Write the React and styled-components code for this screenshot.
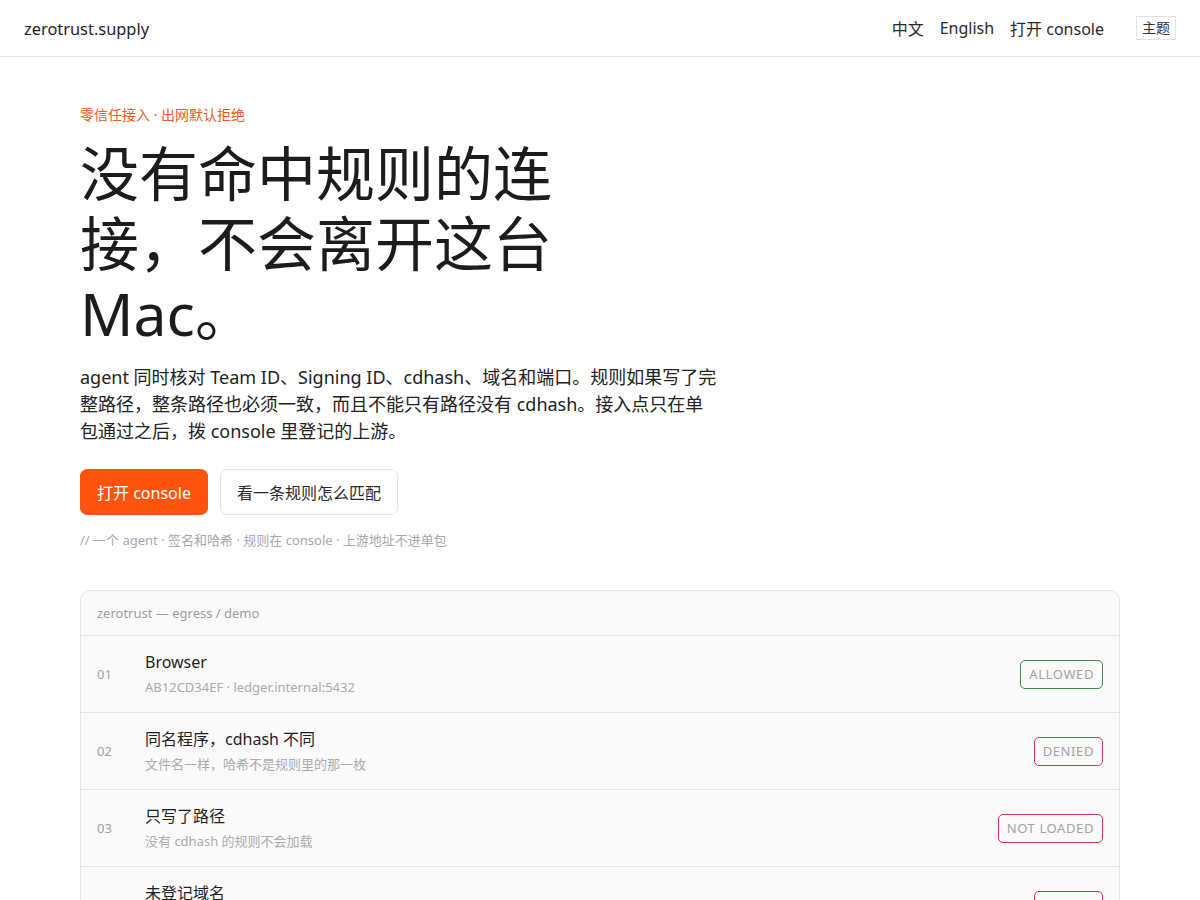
import React from 'react';
import styled, { createGlobalStyle } from 'styled-components';

const GlobalStyle = createGlobalStyle`
  html, body {
    margin: 0;
    padding: 0;
    background: #fff;
    color: #1f1f1f;
    font-family: "Noto Sans", "Noto Sans CJK SC", sans-serif;
  }
  * { box-sizing: border-box; }
`;

const TopBar = styled.header`
  height: 57px;
  display: flex;
  align-items: center;
  justify-content: space-between;
  padding: 0 24px;
  border-bottom: 1px solid #e6e6e6;
`;

const Brand = styled.div`
  font-size: 16.4px;
  color: #1f1f1f;
`;

const Nav = styled.nav`
  display: flex;
  align-items: center;
  gap: 16px;
  font-size: 16px;
  color: #2a2a2a;
`;

const NavLink = styled.span``;

const ThemeButton = styled.button`
  margin-left: 16px;
  font-family: inherit;
  font-size: 14px;
  color: #333;
  background: #fff;
  border: 1px solid #e2e2e2;
  padding: 1px 5px;
  border-radius: 0;
  line-height: 20px;
`;

const Main = styled.main`
  padding: 48px 80px 0;
`;

const Eyebrow = styled.div`
  font-size: 14px;
  color: #ef5a24;
  line-height: 20px;
`;

const Heading = styled.h1`
  margin: 13px 0 0;
  max-width: 500px;
  font-size: 59px;
  line-height: 70px;
  font-weight: 400;
  color: #1c1c1c;
`;

const Lead = styled.p`
  margin: 16px 0 0;
  max-width: 640px;
  font-size: 18px;
  line-height: 27px;
  color: #222;
`;

const Actions = styled.div`
  display: flex;
  gap: 12px;
  margin-top: 24px;
`;

const Button = styled.button`
  height: 46px;
  padding: 0 16px;
  font-family: inherit;
  font-size: 16px;
  border-radius: 7px;
  cursor: pointer;
  border: 1px solid ${p => (p.$primary ? '#ff5410' : '#e4e4e4')};
  background: ${p => (p.$primary ? '#ff5410' : '#fff')};
  color: ${p => (p.$primary ? '#fff' : '#2a2a2a')};
`;

const Note = styled.div`
  margin-top: 15px;
  font-size: 13px;
  color: #a8a8a8;
`;

const Panel = styled.section`
  margin-top: 41px;
  border: 1px solid #e4e4e4;
  border-radius: 10px;
  background: #fafafa;
  overflow: hidden;
`;

const PanelHead = styled.div`
  height: 45px;
  display: flex;
  align-items: center;
  padding: 0 16px;
  font-size: 13px;
  color: #9d9d9d;
  border-bottom: 1px solid #e4e4e4;
`;

const Row = styled.div`
  height: 77px;
  display: grid;
  grid-template-columns: 48px 1fr auto;
  align-items: center;
  padding: 0 16px;
  border-bottom: 1px solid #e4e4e4;
`;

const Num = styled.span`
  font-size: 13px;
  color: #a3a3a3;
`;

const Info = styled.div`
  display: flex;
  flex-direction: column;
  gap: 5px;
  margin-top: -2px;
`;

const Title = styled.span`
  font-size: 16px;
  color: #1f1f1f;
  line-height: 22px;
`;

const Sub = styled.span`
  font-size: 13px;
  color: #ababab;
  line-height: 18px;
`;

const Badge = styled.span`
  height: 29px;
  display: inline-flex;
  align-items: center;
  padding: 0 8px;
  font-size: 13px;
  letter-spacing: 0.6px;
  color: #a3a3a3;
  border-radius: 5px;
  border: 1px solid ${p => (p.$ok ? '#3f8a52' : '#c63c4c')};
`;

const rows = [
  { n: '01', title: 'Browser', sub: 'AB12CD34EF · ledger.internal:5432', badge: 'ALLOWED', ok: true },
  { n: '02', title: '同名程序，cdhash 不同', sub: '文件名一样，哈希不是规则里的那一枚', badge: 'DENIED' },
  { n: '03', title: '只写了路径', sub: '没有 cdhash 的规则不会加载', badge: 'NOT LOADED' },
  { n: '04', title: '未登记域名', sub: '出网默认拒绝，不在 console 里的上游不放行', badge: 'DENIED' },
];

export default function App() {
  return (
    <>
      <GlobalStyle />
      <TopBar>
        <Brand>zerotrust.supply</Brand>
        <Nav>
          <NavLink>中文</NavLink>
          <NavLink>English</NavLink>
          <NavLink>打开 console</NavLink>
          <ThemeButton>主题</ThemeButton>
        </Nav>
      </TopBar>
      <Main>
        <Eyebrow>零信任接入 · 出网默认拒绝</Eyebrow>
        <Heading>没有命中规则的连接，不会离开这台 Mac。</Heading>
        <Lead>
          agent 同时核对 Team ID、Signing ID、cdhash、域名和端口。规则如果写了完整路径，整条路径也必须一致，而且不能只有路径没有 cdhash。接入点只在单包通过之后，拨 console 里登记的上游。
        </Lead>
        <Actions>
          <Button $primary>打开 console</Button>
          <Button>看一条规则怎么匹配</Button>
        </Actions>
        <Note>// 一个 agent · 签名和哈希 · 规则在 console · 上游地址不进单包</Note>
        <Panel>
          <PanelHead>zerotrust — egress / demo</PanelHead>
          {rows.map(r => (
            <Row key={r.n}>
              <Num>{r.n}</Num>
              <Info>
                <Title>{r.title}</Title>
                <Sub>{r.sub}</Sub>
              </Info>
              <Badge $ok={r.ok}>{r.badge}</Badge>
            </Row>
          ))}
        </Panel>
      </Main>
    </>
  );
}
